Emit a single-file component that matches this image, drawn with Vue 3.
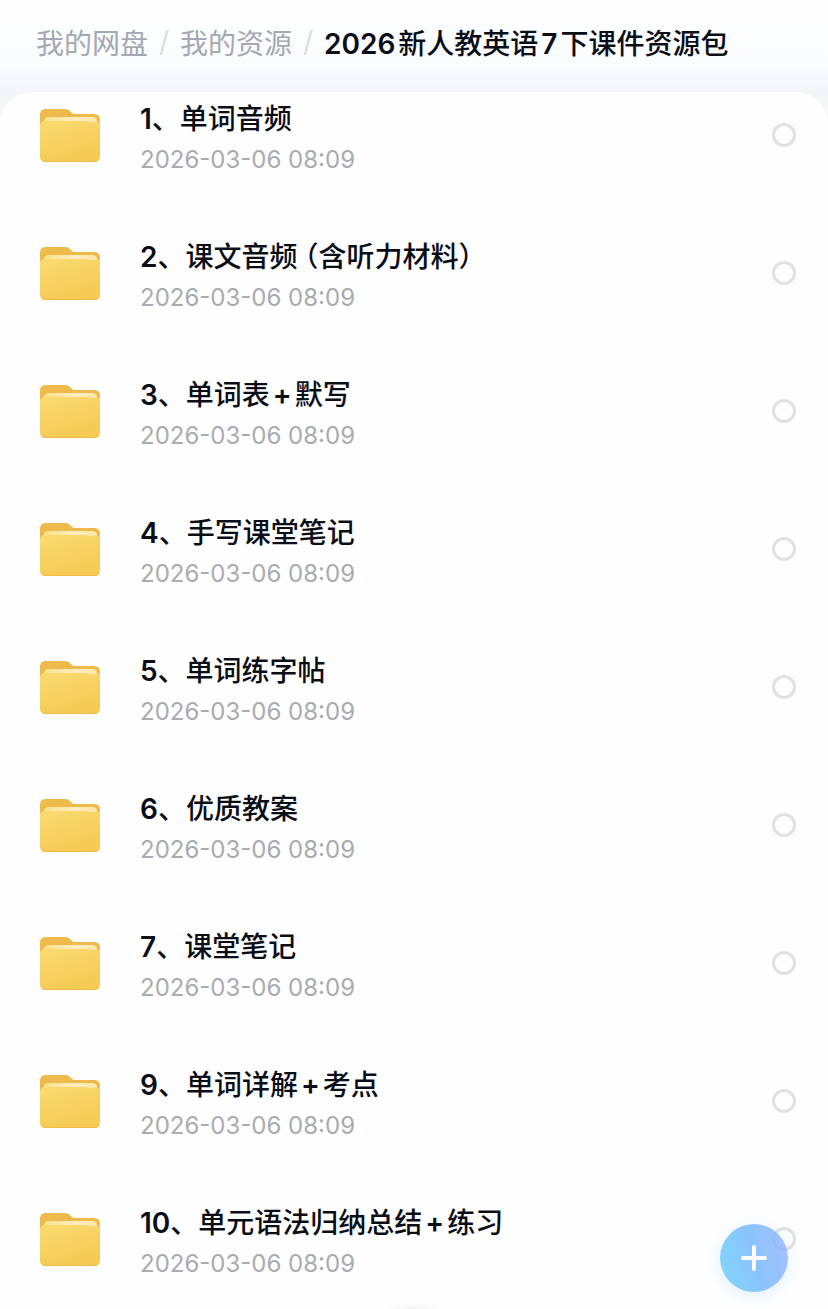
<script setup>
import { ref } from 'vue'

// Splits a name into runs so digits, plus signs and brackets get their own styling.
const runs = (text) =>
  text
    .split(/([0-9]+|\+|（|）)/)
    .filter(Boolean)
    .map((value) => ({
      value,
      kind: /^[0-9]+$/.test(value) ? 'digits' : value === '+' ? 'plus' : value === '（' ? 'open' : 'plain',
    }))

const parents = ['我的网盘', '我的资源']
const current = runs('2026新人教英语7下课件资源包')
const folders = [
  '1、单词音频',
  '2、课文音频（含听力材料）',
  '3、单词表+默写',
  '4、手写课堂笔记',
  '5、单词练字帖',
  '6、优质教案',
  '7、课堂笔记',
  '9、单词详解+考点',
  '10、单元语法归纳总结+练习',
].map((name) => ({ name, runs: runs(name), date: '2026-03-06 08:09' }))
const selected = ref([])
</script>

<template>
  <div class="page">
    <nav class="crumbs" aria-label="路径">
      <template v-for="p in parents" :key="p">
        <a href="#">{{ p }}</a>
        <span class="slash">/</span>
      </template>
      <span class="current" aria-current="page"><span v-for="(r, k) in current" :key="k" :class="r.kind">{{ r.value }}</span></span>
    </nav>

    <main class="card">
      <ul class="list">
        <li v-for="(f, i) in folders" :key="f.name" class="item">
          <svg class="folder" viewBox="0 0 60 54" aria-hidden="true">
            <defs>
              <linearGradient id="front" x1="0" y1="0" x2="0.4" y2="1">
                <stop offset="0" stop-color="#fadb72" />
                <stop offset="1" stop-color="#f5ca55" />
              </linearGradient>
              <linearGradient id="paper" x1="0" y1="0" x2="1" y2="0">
                <stop offset="0" stop-color="#fbe08a" />
                <stop offset="0.6" stop-color="#fdeec0" />
                <stop offset="1" stop-color="#fbe6a4" />
              </linearGradient>
            </defs>
            <path d="M6 0H25C28 0 29 1 31 3C33 5 34 5 37 5H54C58 5 60 7 60 11V30H0V6C0 2 2 0 6 0Z" fill="#edba4b" />
            <path d="M9 8H51C55 8 57 9 57 12V20H4V12C4 9 6 8 9 8Z" fill="url(#paper)" />
            <path d="M0 16C0 14 2 12 5 12H44C48 12 49 13 52 13H56C59 13 60 12 60 11V47C60 51 58 53 54 53H6C2 53 0 51 0 47Z" fill="url(#front)" />
            <path d="M1 49C2 52 4 53 6 53H54C56 53 58 52 59 49C58 51 56 52 54 52H6C4 52 2 51 1 49Z" fill="#edbb45" />
          </svg>
          <label class="text" :for="'pick' + i">
            <span class="name"><span v-for="(r, k) in f.runs" :key="k" :class="r.kind">{{ r.value }}</span></span>
            <time class="date">{{ f.date }}</time>
          </label>
          <input :id="'pick' + i" v-model="selected" class="pick" type="checkbox" :value="f.name" />
        </li>
      </ul>
    </main>

    <div class="glow" aria-hidden="true"></div>
    <button class="add" type="button" aria-label="添加">
      <svg viewBox="0 0 26 26" aria-hidden="true">
        <path d="M13 2V24M2 13H24" stroke="#fff" stroke-width="4" stroke-linecap="round" />
      </svg>
    </button>
  </div>
</template>

<style>
body {
  margin: 0;
}
</style>

<style scoped>
.page {
  min-height: 100vh;
  display: flex;
  flex-direction: column;
  background: linear-gradient(#fefefe 0, #fafcfe 60px, #f4f5f9 92px, #f8f9fb 130px);
  font-family: Inter, "Noto Sans CJK SC", sans-serif;
  color: #0b0e17;
}
.crumbs {
  display: flex;
  align-items: center;
  height: 84px;
  padding: 0 36px 8px;
  font-size: 28px;
  white-space: nowrap;
}
.crumbs a {
  color: #a4a8b3;
  text-decoration: none;
}
.slash {
  width: 32px;
  text-align: center;
  color: #dadce0;
}
.current {
  font-weight: 500;
}
.digits {
  font-weight: 600;
}
.current .digits {
  margin-right: 3px;
}
.current .plain + .digits {
  margin-left: 3px;
}
.plus {
  margin: 0 3px;
  font-weight: 600;
}
.open {
  margin-left: 7px;
  font-feature-settings: "halt";
}
.card {
  flex: 1;
  background: #fefefe;
  border-radius: 32px 32px 0 0;
  padding: 6px 32px 24px 40px;
}
.list {
  list-style: none;
  margin: 0;
  padding: 0;
  display: grid;
  gap: 56px;
}
.item {
  display: flex;
  align-items: flex-start;
}
.folder {
  width: 60px;
  height: 54px;
  margin: 11px 40px 0 0;
}
.text {
  flex: 1;
  display: flex;
  flex-direction: column;
}
.name {
  font-size: 28px;
  line-height: 42px;
  font-weight: 500;
}
.date {
  font-size: 24px;
  line-height: 40px;
  color: #a9abb0;
}
.pick {
  appearance: none;
  box-sizing: border-box;
  width: 24px;
  height: 24px;
  margin: 25px 0 0;
  border: 3px solid #e0e1e3;
  border-radius: 50%;
}
.pick:checked {
  background: #7db8ff;
}
.add {
  position: fixed;
  right: 40px;
  bottom: 17px;
  width: 68px;
  height: 68px;
  padding: 0;
  display: grid;
  place-items: center;
  border: 0;
  border-radius: 50%;
  background: linear-gradient(75deg, #69cffad9, #76bafcd9 50%, #92b2fdd0);
  box-shadow: 0 4px 16px rgba(120, 190, 255, 0.22);
}
.add svg {
  width: 26px;
  height: 26px;
}
.glow {
  position: fixed;
  left: calc(50% - 30px);
  bottom: 0;
  width: 60px;
  height: 6px;
  background: radial-gradient(ellipse at bottom, #f4f4f5, rgba(254, 254, 254, 0) 70%);
}
</style>
